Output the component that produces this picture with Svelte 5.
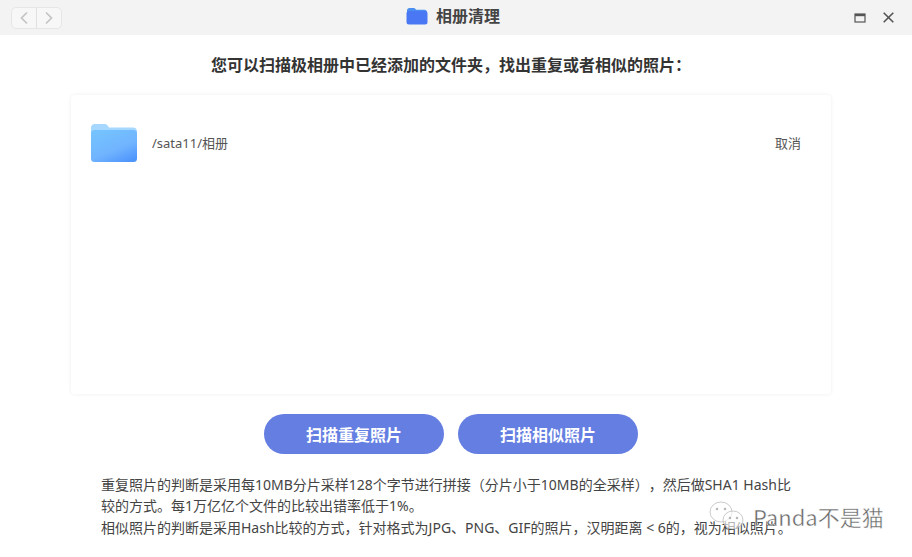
<script>
  const notes = [
    '重复照片的判断是采用每10MB分片采样128个字节进行拼接（分片小于10MB的全采样），然后做SHA1 Hash比较的方式。每1万亿亿个文件的比较出错率低于1%。',
    '相似照片的判断是采用Hash比较的方式，针对格式为JPG、PNG、GIF的照片，汉明距离 < 6的，视为相似照片。'
  ];
</script>

<div class="window">
  <header class="titlebar">
    <div class="nav">
      <button class="nav-btn" aria-label="back">
        <svg width="10" height="14" viewBox="0 0 10 14"><path d="M8 1.5 2.5 7 8 12.5" /></svg>
      </button>
      <button class="nav-btn" aria-label="forward">
        <svg width="10" height="14" viewBox="0 0 10 14"><path d="M2 1.5 7.5 7 2 12.5" /></svg>
      </button>
    </div>
    <div class="title">
      <svg width="22" height="18" viewBox="0 0 22 18">
        <path d="M1 3.5C1 2 2 1 3.5 1h4.200c.8 0 1.300.3 1.800 1l.6.8h8.400c1.500 0 2.500 1 2.500 2.500V8H1z" fill="#4a8ff0" />
        <rect x="0.5" y="4" width="21" height="13.500" rx="2.500" fill="#4a78f5" />
      </svg>
      <span>相册清理</span>
    </div>
    <div class="win-controls">
      <svg width="12" height="10" viewBox="0 0 12 10"><rect x="1" y="1" width="10" height="8" fill="none" stroke="#555" stroke-width="1.200" /><rect x="1" y="1" width="10" height="2.200" fill="#555" /></svg>
      <svg width="11" height="11" viewBox="0 0 11 11"><path d="M.7.7l9.600 9.600M10.300.7.700 10.300" stroke="#555" stroke-width="1.600" /></svg>
    </div>
  </header>

  <main class="content">
    <h1>您可以扫描极相册中已经添加的文件夹，找出重复或者相似的照片：</h1>

    <section class="card">
      <div class="row">
        <svg class="folder" width="46" height="38" viewBox="0 0 46 38">
          <defs>
            <linearGradient id="front" x1="0.2" y1="0" x2="0.8" y2="1">
              <stop offset="0" stop-color="#75c3fe" />
              <stop offset="0.6" stop-color="#70b4ff" />
              <stop offset="1" stop-color="#4f96fc" />
            </linearGradient>
          </defs>
          <path d="M0 4C0 1.500 1.500 0 4 0h9c1.800 0 3 .6 4 2l1 1.500h24c2.500 0 4 1.500 4 4V14H0z" fill="#a6d8ff" />
          <rect x="0" y="6" width="46" height="32" rx="3.500" fill="url(#front)" />
        </svg>
        <span class="path">/sata11/相册</span>
        <span class="cancel">取消</span>
      </div>
    </section>

    <div class="actions">
      <button class="primary">扫描重复照片</button>
      <button class="primary">扫描相似照片</button>
    </div>

    <div class="notes">
      {#each notes as note}
        <p>{note}</p>
      {/each}
    </div>
  </main>

  <div class="watermark">
    <svg width="36" height="30" viewBox="0 0 36 30" fill="none" stroke="#b5b5b5" stroke-width="0.7">
      <ellipse cx="12" cy="11" rx="11" ry="10" fill="#fff" fill-opacity="0.6" />
      <ellipse cx="24" cy="19" rx="10" ry="9" fill="#fff" fill-opacity="0.6" />
      <circle cx="8" cy="8" r="0.9" fill="#999" /><circle cx="16" cy="8" r="0.9" fill="#999" />
      <circle cx="21" cy="17" r="0.9" fill="#999" /><circle cx="28" cy="17" r="0.9" fill="#999" />
    </svg>
    <span>Panda不是猫</span>
  </div>
</div>

<style>
  :global(body) {
    margin: 0;
    background: #fff;
  }

  .window {
    position: relative;
    width: 912px;
    height: 557px;
    overflow: hidden;
    background: #fff;
    font-family: "Noto Sans", "Noto Sans CJK SC", sans-serif;
    text-spacing-trim: space-all;
    color: #333;
  }

  .titlebar {
    position: relative;
    display: flex;
    align-items: center;
    justify-content: space-between;
    height: 35px;
    padding: 0 18px 0 11px;
    background: #f3f3f3;
  }

  .nav {
    display: flex;
    width: 49px;
    height: 20px;
    border: 1px solid #e6e6e6;
    border-radius: 5px;
    background: #f7f7f7;
  }

  .nav-btn {
    flex: 1;
    display: flex;
    align-items: center;
    justify-content: center;
    padding: 0;
    border: 0;
    background: none;
  }

  .nav-btn + .nav-btn {
    border-left: 1px solid #e0e0e0;
  }

  .nav-btn path {
    fill: none;
    stroke: #c4c4c4;
    stroke-width: 1.700;
  }

  .title {
    position: absolute;
    left: 406px;
    top: 5px;
    display: flex;
    align-items: center;
    gap: 8px;
    font-size: 16px;
    font-weight: 700;
    color: #444;
    line-height: 22px;
  }

  .win-controls {
    display: flex;
    align-items: center;
    gap: 17px;
  }

  .content {
    display: flex;
    flex-direction: column;
    align-items: center;
    padding-right: 10px;
  }

  h1 {
    margin: 20px 0 0;
    font-size: 16px;
    line-height: 20px;
    font-weight: 700;
    color: #333;
  }

  .card {
    box-sizing: border-box;
    width: 760px;
    height: 299px;
    margin-top: 20px;
    border-radius: 4px;
    box-shadow: 0 0 4px rgba(0, 0, 0, 0.07);
    background: #fff;
  }

  .row {
    display: flex;
    align-items: center;
    padding: 29px 30px 0 20px;
  }

  .folder {
    flex: none;
  }

  .path {
    margin-left: 15px;
    font-size: 13px;
    line-height: 18px;
    color: #555;
  }

  .cancel {
    margin-left: auto;
    font-size: 13px;
    line-height: 18px;
    color: #555;
  }

  .actions {
    display: flex;
    gap: 14px;
    margin-top: 20px;
  }

  .primary {
    width: 180px;
    height: 40px;
    padding: 0;
    border: 0;
    border-radius: 20px;
    background: #647ee2;
    color: #fff;
    font: 700 16px "Noto Sans", "Noto Sans CJK SC", sans-serif;
  }

  .notes {
    box-sizing: border-box;
    width: 100%;
    padding: 20px 106px 0 101px;
    font-size: 14px;
    line-height: 21px;
    color: #444;
  }

  .notes p {
    margin: 0;
  }

  .notes p + p {
    margin-top: 1px;
  }

  .watermark {
    position: absolute;
    left: 709px;
    top: 501px;
    display: flex;
    align-items: center;
    gap: 8px;
    font-family: "Noto Sans CJK SC", sans-serif;
    font-size: 22px;
    line-height: 30px;
    color: #666;
    -webkit-text-stroke: 0.4px #fff;
  }
</style>
